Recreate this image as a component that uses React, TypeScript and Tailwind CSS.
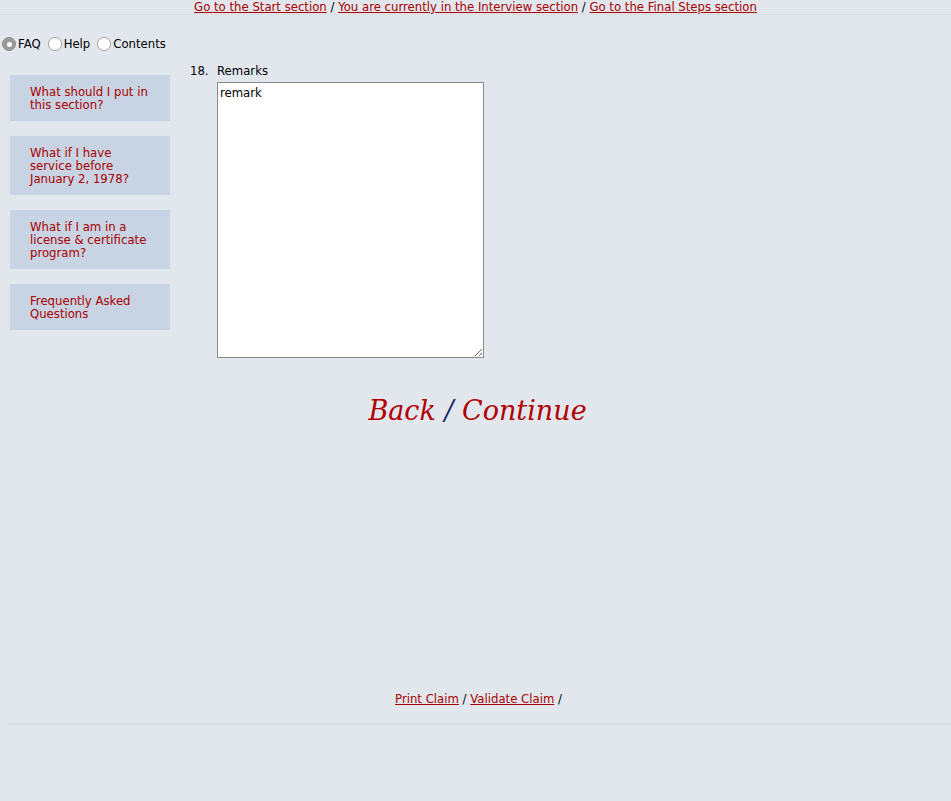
import React from "react";

const sans = { fontFamily: '"DejaVu Sans", Verdana, sans-serif' };

function Radio({ checked, label }: { checked?: boolean; label: string }) {
  return (
    <label className="flex items-center text-[11.7px] leading-[14px] text-black">
      <span
        className={
          "w-[14px] h-[14px] rounded-full border flex items-center justify-center mr-[2px] " +
          (checked ? "border-[#8a8a8a] bg-[#9a9a9a]" : "border-[#a0a0a0] bg-white")
        }
      >
        {checked && <span className="w-[5px] h-[5px] rounded-full bg-white" />}
      </span>
      {label}
    </label>
  );
}

function SideBox({ lines }: { lines: string[] }) {
  return (
    <div className="w-[160px] bg-[#c8d3e4] pl-[20px] pr-[10px] pt-[11px] pb-[9px] text-[11.7px] leading-[13px] text-[#a80000]">
      {lines.map((l, i) => (
        <div key={i}>{l}</div>
      ))}
    </div>
  );
}

export default function App() {
  return (
    <div className="min-h-[801px] w-[951px] bg-[#e2e7ee] text-black" style={sans}>
      <div className="h-[15px] border-b border-[#d9dde3] flex justify-center text-[11.7px] leading-[14px]">
        <div>
          <a className="underline text-[#a80000]">Go to the Start section</a>
          <span className="text-black"> / </span>
          <a className="underline text-[#a80000]">You are currently in the Interview section</a>
          <span className="text-black"> / </span>
          <a className="underline text-[#a80000]">Go to the Final Steps section</a>
        </div>
      </div>
      <div className="flex items-start gap-[7px] pl-[2px] pt-[22px] h-[60px]">
        <Radio checked label="FAQ" />
        <Radio label="Help" />
        <Radio label="Contents" />
      </div>
      <div className="flex">
        <div className="pl-[10px] flex flex-col gap-[15px]">
          <SideBox lines={["What should I put in", "this section?"]} />
          <SideBox lines={["What if I have", "service before", "January 2, 1978?"]} />
          <SideBox lines={["What if I am in a", "license & certificate", "program?"]} />
          <SideBox lines={["Frequently Asked", "Questions"]} />
        </div>
        <div className="pl-[20px] -mt-[11px]">
          <div className="flex text-[11.7px] leading-[14px]">
            <span className="w-[27px]">18.</span>
            <span>Remarks</span>
          </div>
          <div className="pl-[27px] pt-[4px]">
            <textarea
              defaultValue="remark"
              className="w-[267px] h-[276px] bg-white border border-[#8a8a8a] text-[11.7px] px-[2px] py-[3px] leading-[14px] outline-none resize"
              style={sans}
            />
          </div>
        </div>
      </div>
      <div
        className="text-center pt-[30px] pl-[4px] text-[27px] leading-[32px] italic"
        style={{ fontFamily: '"DejaVu Serif", Georgia, serif' }}
      >
        <a className="text-[#b00000]">Back</a>
        <span className="text-[#1a2a6a]"> / </span>
        <a className="text-[#b00000]">Continue</a>
      </div>
      <div className="text-center text-[11.7px] leading-[14px] mt-[265px] pl-[6px]">
        <a className="underline text-[#a80000]">Print Claim</a>
        <span> / </span>
        <a className="underline text-[#a80000]">Validate Claim</a>
        <span> /</span>
      </div>
      <div className="ml-[8px] mt-[17px] border-t-2 border-[#dadde2]" />
    </div>
  );
}
